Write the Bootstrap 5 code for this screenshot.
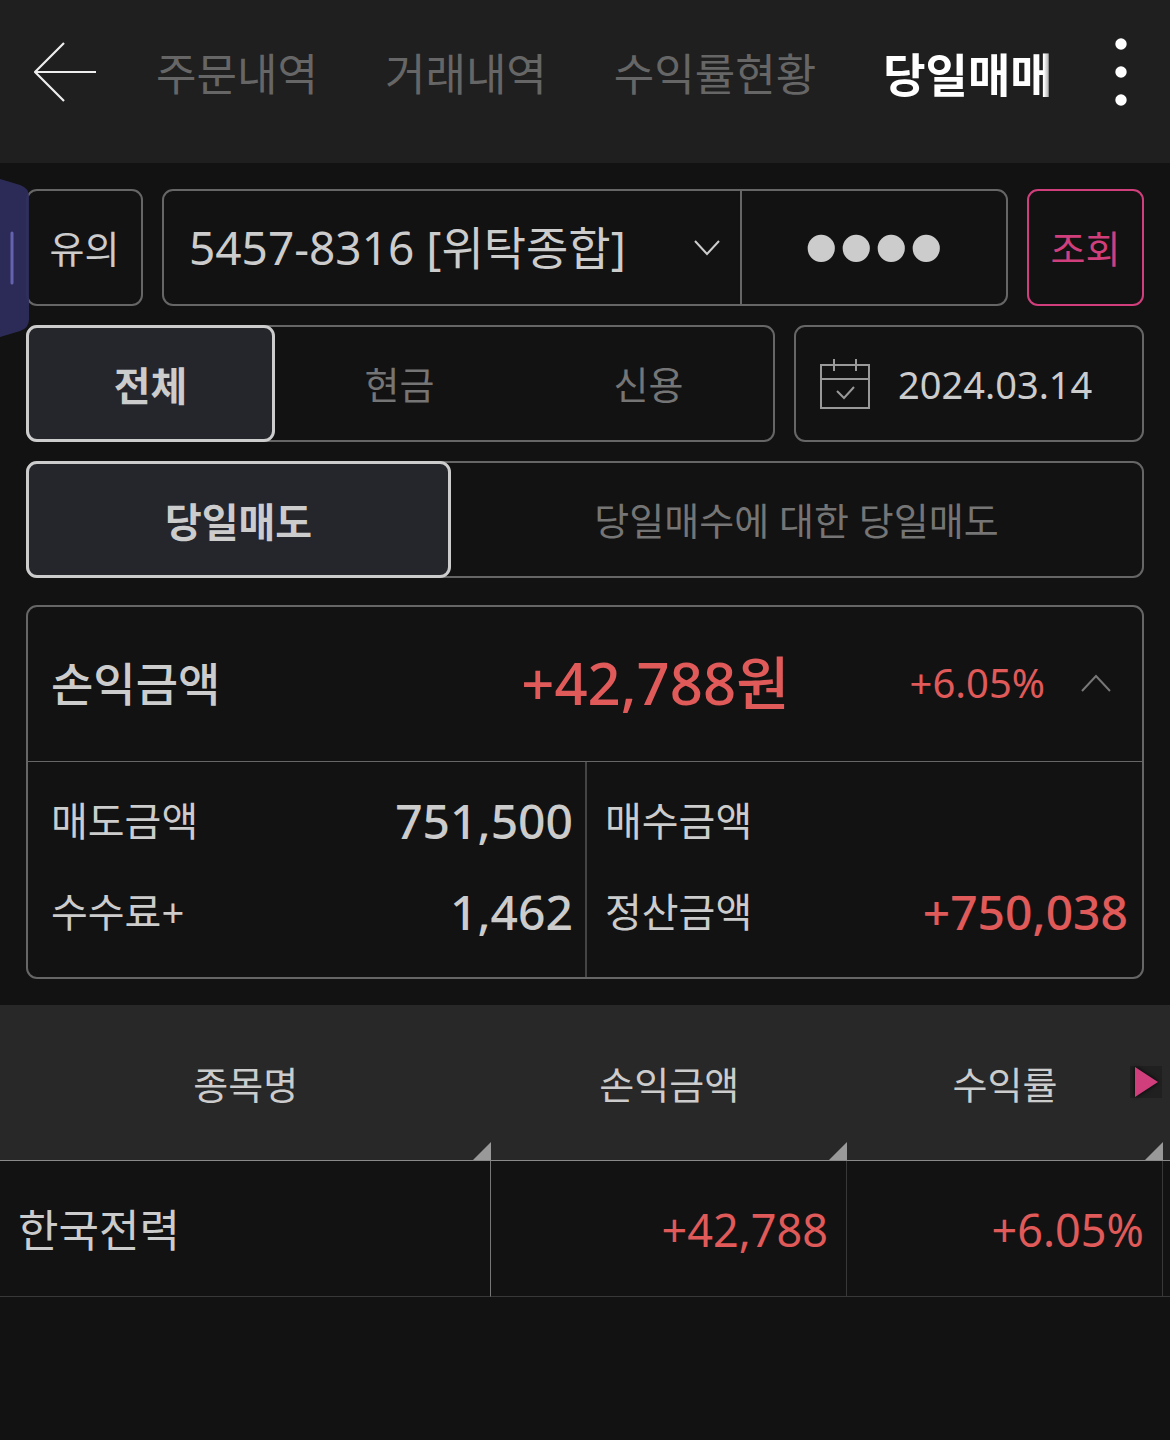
<!DOCTYPE html>
<html lang="ko" data-bs-theme="dark">
<head>
<meta charset="utf-8">
<meta name="viewport" content="width=device-width, initial-scale=1">
<title>당일매매</title>
<link href="https://cdn.jsdelivr.net/npm/bootstrap@5.3.0/dist/css/bootstrap.min.css" rel="stylesheet">
<style>
  :root { --line: #666; --ink: #ccc; --dim: #757575; --up: #e05a5a; --accent: #d03f7c; }
  body { background: #121212; color: var(--ink); font-family: "Noto Sans", "Noto Sans CJK KR", sans-serif; font-size: 38px; line-height: 56px; overflow-x: hidden; }
  button, select, input { font-family: inherit; color: inherit; }
  .topbar { background: #1f1f1f; height: 163px; padding: 0 41px 20px 34px; }
  .icon-btn { background: none; border: 0; padding: 0; line-height: 0; }
  .tabs { gap: 67px; margin-left: 59px; padding-top: 5px; white-space: nowrap; }
  .tabs a { font-size: 44px; line-height: 64px; color: #666; text-decoration: none; }
  .tabs a.active { font-size: 46px; font-weight: 700; color: #fff; -webkit-mask-image: linear-gradient(to left, rgba(0,0,0,.3), #000 9px); mask-image: linear-gradient(to left, rgba(0,0,0,.3), #000 9px); }
  .filters { padding: 26px 26px 0; gap: 19px; }
  .filters > div { gap: 19px; }
  .box { height: 117px; border: 2px solid var(--line); border-radius: 11px; background: none; }
  .box-sq { width: 117px; padding: 0; flex: none; }
  .box-accent { border-color: var(--accent); color: var(--accent); }
  .account { flex: 577; }
  .account select { appearance: none; background: none; border: 0; width: 100%; height: 100%; font-size: 46px; padding: 0 60px 2px 25px; color: var(--ink); }
  .account svg { right: 19px; top: 48px; pointer-events: none; }
  .secret { flex: 265; min-width: 0; background: none; border: 0; border-left: 2px solid var(--line); text-align: center; font-family: "Liberation Sans", sans-serif; font-size: 100px; padding: 0; color: var(--ink); }
  .seg > button { background: none; border: 0; color: var(--dim); flex: 1; padding: 0; }
  .seg > button.on { background: #25262c; color: var(--ink); font-weight: 700; font-size: 40px; border: 3px solid var(--ink); border-radius: 11px; margin: -2px 0 -2px -2px; padding-top: 4px; }
  .seg-kind { flex: 0 0 67%; }
  .seg-kind > button.on { flex: 0 0 249px; }
  .seg-side > button.on { flex: 0 0 425px; }
  .date { padding: 0 24px; gap: 28px; font-size: 38px; }
  .summary { margin: 27px 26px 26px; border: 2px solid var(--line); border-radius: 11px; }
  .summary-head { height: 155px; padding: 0 30px 2px 23px; border-bottom: 1px solid var(--line); }
  .summary-head h1 { font-size: 46px; line-height: 64px; font-weight: 500; margin: 0; color: var(--ink); }
  .total { font-size: 58px; line-height: 80px; font-weight: 500; margin-left: auto; }
  .rate { font-size: 40px; margin-left: 120px; margin-right: 35px; }
  .sums { height: 215px; padding: 13px 0; }
  .sums > div { height: 91px; }
  .cell-l { padding: 0 12px 0 23px; }
  .cell-r { padding: 0 14px 0 18px; }
  .half-r { border-left: 2px solid #444; }
  dl, dt, dd { margin: 0; font-weight: 400; }
  dt { font-size: 40px; }
  dd { font-size: 48px; font-weight: 500; }
  .up { color: var(--up) !important; }
  .grid-table { width: 100%; table-layout: fixed; border-collapse: separate; border-spacing: 0; }
  .grid-table th { background: #282828; height: 156px; border-bottom: 1px solid #8a8a8a; text-align: center; font-weight: 400; position: relative; padding: 3px 0 0; }
  .grid-table th.sortable::after { content: ""; position: absolute; right: 0; bottom: 0; border-left: 18px solid transparent; border-bottom: 18px solid #999; }
  .grid-table td { height: 136px; border-bottom: 1px solid #383838; border-right: 1px solid #383838; font-size: 45px; text-align: right; padding: 3px 18px 0; }
  .grid-table td:first-child { font-size: 44px; text-align: left; border-right-color: #777; }
  .grid-table td:last-child { border-right: 0; }
  .c1 { width: 42%; } .c2 { width: 30.4%; } .c3 { width: 27%; }
  .more { right: 8px; top: 61px; background: #202020; }
  .more svg { filter: drop-shadow(0 0 2px #000); }
  .side-handle { left: 0; top: 179px; z-index: 5; }
  .front { position: relative; z-index: 6; }
</style>
<script src="https://cdn.jsdelivr.net/npm/bootstrap@5.3.0/dist/js/bootstrap.bundle.min.js"></script>
</head>
<body class="position-relative">
<header class="topbar d-flex align-items-center">
  <button class="icon-btn" aria-label="뒤로"><svg width="63" height="60" fill="none" stroke="#eee" stroke-width="2.2"><path d="M30 1 1 30l29 29M1 30h61"/></svg></button>
  <nav class="tabs d-flex align-items-center">
    <a href="#">주문내역</a><a href="#">거래내역</a><a href="#">수익률현황</a><a href="#" class="active" aria-current="page">당일매매</a>
  </nav>
  <button class="icon-btn ms-auto" aria-label="메뉴"><svg width="16" height="70" fill="#fff"><circle cx="8" cy="7" r="5.7"/><circle cx="8" cy="35" r="5.7"/><circle cx="8" cy="63" r="5.7"/></svg></button>
</header>

<main>
  <div class="filters d-flex flex-column">
    <div class="d-flex">
      <button class="box box-sq">유의</button>
      <div class="box d-flex flex-fill overflow-hidden">
        <div class="account position-relative">
          <select aria-label="계좌"><option>5457-8316 [위탁종합]</option></select>
          <svg class="position-absolute" width="28" height="18" fill="none" stroke="#ccc" stroke-width="2"><path d="m2 2 12 13L26 2"/></svg>
        </div>
        <input class="secret" type="password" value="0000" aria-label="비밀번호">
      </div>
      <button class="box box-sq box-accent">조회</button>
    </div>
    <div class="d-flex">
      <div class="box seg seg-kind d-flex front">
        <button class="on">전체</button><button>현금</button><button>신용</button>
      </div>
      <button class="box date d-flex align-items-center flex-fill">
        <svg width="50" height="50" fill="none" stroke="#999" stroke-width="2"><path d="M1 6h48v43H1zM1 20h48M14 0v12M36 0v12M17 32l7 7 10-11"/></svg>
        <span>2024.03.14</span>
      </button>
    </div>
    <div class="box seg seg-side d-flex gap-0">
      <button class="on">당일매도</button><button>당일매수에 대한 당일매도</button>
    </div>
  </div>

  <section class="summary">
    <div class="summary-head d-flex align-items-center">
      <h1>손익금액</h1>
      <span class="total up">+42,788원</span>
      <span class="rate up">+6.05%</span>
      <button class="icon-btn" aria-label="접기"><svg width="32" height="20" fill="none" stroke="#777" stroke-width="2"><path d="M2 18 16 3l14 15"/></svg></button>
    </div>
    <div class="row g-0">
      <dl class="col-6 sums">
        <div class="cell-l d-flex justify-content-between align-items-center"><dt>매도금액</dt><dd>751,500</dd></div>
        <div class="cell-l d-flex justify-content-between align-items-center"><dt>수수료+</dt><dd>1,462</dd></div>
      </dl>
      <dl class="col-6 sums half-r">
        <div class="cell-r d-flex justify-content-between align-items-center"><dt>매수금액</dt><dd></dd></div>
        <div class="cell-r d-flex justify-content-between align-items-center"><dt>정산금액</dt><dd class="up">+750,038</dd></div>
      </dl>
    </div>
  </section>

  <div class="position-relative">
    <table class="grid-table">
      <colgroup><col class="c1"><col class="c2"><col class="c3"><col></colgroup>
      <thead><tr><th class="sortable">종목명</th><th class="sortable">손익금액</th><th class="sortable">수익률</th><th></th></tr></thead>
      <tbody><tr><td>한국전력</td><td class="up">+42,788</td><td class="up">+6.05%</td><td class="p-0"></td></tr></tbody>
    </table>
    <button class="icon-btn more position-absolute" aria-label="다음 열"><svg width="32" height="32"><path d="M5 1v30l23-15z" fill="#d03f7c"/></svg></button>
  </div>
</main>

<svg class="side-handle position-absolute" width="29" height="158"><path d="M0 0 20 6Q29 9 29 18V140Q29 149 20 152L0 158Z" fill="#2e2d5c" fill-opacity=".95"/><path d="M12 54v50" stroke="#6563b0" stroke-width="3" stroke-linecap="round"/></svg>
</body>
</html>
